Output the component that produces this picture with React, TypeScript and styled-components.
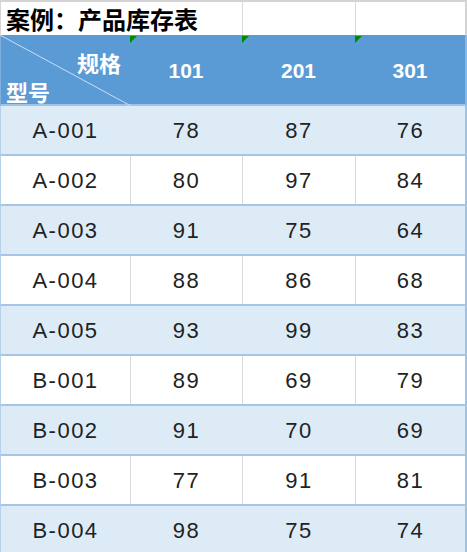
import React from "react";
import { styled, createGlobalStyle } from "styled-components";

const rows = [
  { model: "A-001", v: [78, 87, 76] },
  { model: "A-002", v: [80, 97, 84] },
  { model: "A-003", v: [91, 75, 64] },
  { model: "A-004", v: [88, 86, 68] },
  { model: "A-005", v: [93, 99, 83] },
  { model: "B-001", v: [89, 69, 79] },
  { model: "B-002", v: [91, 70, 69] },
  { model: "B-003", v: [77, 91, 81] },
  { model: "B-004", v: [98, 75, 74] },
];

const specs = ["101", "201", "301"];

export default function App() {
  return (
    <>
      <Global />
      <Sheet>
        <TitleRow>
          <Title>案例：产品库存表</Title>
          <TitleCell />
          <TitleCell />
        </TitleRow>
        <HeaderRow>
          <CornerCell>
            <Diagonal viewBox="0 0 100 100" preserveAspectRatio="none">
              <line x1="0" y1="0" x2="100" y2="100" stroke="#c9def3" strokeWidth="1" vectorEffect="non-scaling-stroke" />
            </Diagonal>
            <SpecLabel>规格</SpecLabel>
            <ModelLabel>型号</ModelLabel>
          </CornerCell>
          {specs.map((s) => (
            <HeaderCell key={s}>{s}</HeaderCell>
          ))}
        </HeaderRow>
        {rows.map((r, i) => (
          <DataRow key={r.model} $alt={i % 2 === 0}>
            <Cell $alt={i % 2 === 0} $first>
              {r.model}
            </Cell>
            {r.v.map((n, j) => (
              <Cell key={j} $alt={i % 2 === 0}>
                {n}
              </Cell>
            ))}
          </DataRow>
        ))}
      </Sheet>
    </>
  );
}

const Global = createGlobalStyle`
  html, body {
    margin: 0;
    padding: 0;
    background: #ffffff;
    overflow: hidden;
  }
`;

const cols = "129px 112px 113px 110px";

const Sheet = styled.div`
  width: 467px;
  display: flex;
  flex-direction: column;
`;

const TitleRow = styled.div`
  display: grid;
  grid-template-columns: ${cols};
  height: 33px;
  border-top: 2px solid #d4d4d4;
  border-left: 1px solid #d4d4d4;
  border-right: 2px solid #d4d4d4;
  background: #ffffff;
`;

const Title = styled.div`
  grid-column: span 2;
  padding-left: 5px;
  font-family: "Noto Sans CJK SC", sans-serif;
  font-weight: 700;
  font-size: 24px;
  line-height: 33px;
  color: #000000;
  white-space: nowrap;
`;

const TitleCell = styled.div`
  border-left: 1px solid #d9d9d9;
`;

const HeaderRow = styled.div`
  display: grid;
  grid-template-columns: ${cols};
  height: 69px;
  background: #5b9bd5;
  border-left: 1px solid #7fb0de;
  border-right: 2px solid #8ab8e3;
  border-bottom: 2px solid #9dc3e6;
`;

const CornerCell = styled.div`
  position: relative;
  display: flex;
  flex-direction: column;
  padding-top: 14px;
  gap: 3px;
  font-family: "Noto Sans CJK SC", sans-serif;
  font-weight: 700;
  font-size: 22px;
  line-height: 26px;
  color: #ffffff;
`;

const Diagonal = styled.svg`
  position: absolute;
  left: -1px;
  top: 0;
  width: 131px;
  height: 71px;
`;

const SpecLabel = styled.span`
  position: relative;
  align-self: flex-end;
  padding-right: 9px;
`;

const ModelLabel = styled.span`
  position: relative;
  align-self: flex-start;
  padding-left: 5px;
`;

const HeaderCell = styled.div`
  position: relative;
  display: flex;
  align-items: center;
  justify-content: center;
  padding-top: 2px;
  font-family: "Liberation Sans", Arial, sans-serif;
  font-weight: 700;
  font-size: 21px;
  color: #ffffff;

  &::before {
    content: "";
    position: absolute;
    left: 0;
    top: 1px;
    border-top: 7px solid #008a00;
    border-right: 7px solid transparent;
  }
`;

const DataRow = styled.div<{ $alt: boolean }>`
  display: grid;
  grid-template-columns: ${cols};
  height: 48px;
  background: ${(p) => (p.$alt ? "#ddebf7" : "#ffffff")};
  border-left: 1px solid #b7d1ea;
  border-right: 2px solid #9dc3e6;
  border-bottom: 2px solid #a4c7e8;
`;

const Cell = styled.div<{ $alt: boolean; $first?: boolean }>`
  display: flex;
  align-items: center;
  justify-content: center;
  padding-top: 2px;
  border-left: ${(p) =>
    p.$first ? "none" : `1px solid ${p.$alt ? "#ddebf7" : "#d9d9d9"}`};
  font-family: "Liberation Sans", Arial, sans-serif;
  font-size: 22px;
  letter-spacing: 1.5px;
  color: #222222;
`;
